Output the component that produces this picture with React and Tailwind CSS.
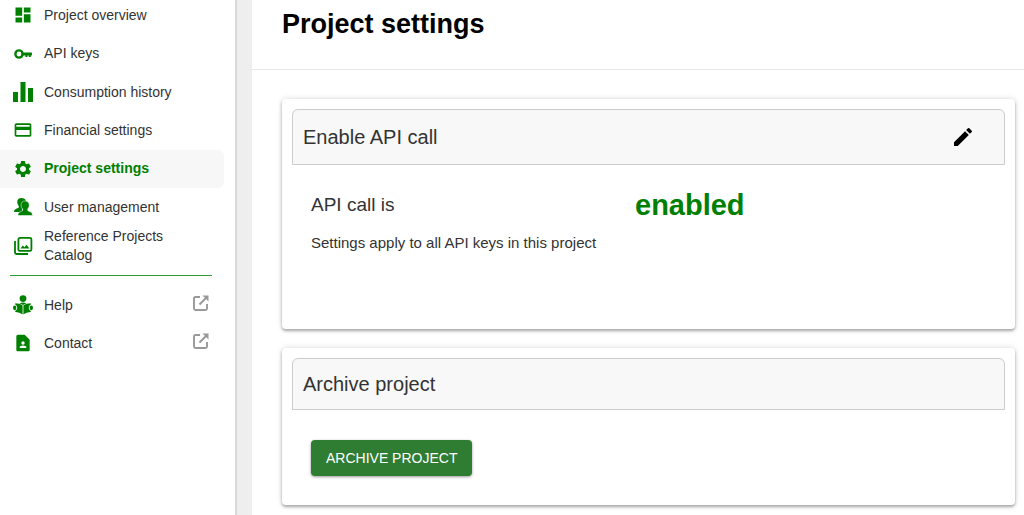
import React from "react";
import {
  MdDashboard,
  MdCreditCard,
  MdSettings,
  MdContactPage,
  MdEdit,
} from "react-icons/md";

const KeyIcon = () => (
  <svg viewBox="0 0 18 12" className="w-[18px] h-3" fill="none" stroke="currentColor">
    <circle cx="5" cy="6" r="3.600" strokeWidth="2.400" />
    <path d="M9 6h8" strokeWidth="3" strokeLinecap="round" />
    <path d="M12.5 6v3M15.8 6v3" strokeWidth="2" />
  </svg>
);

const BarsIcon = () => (
  <svg viewBox="0 0 20 20" className="w-5 h-5" fill="currentColor">
    <path d="M0 10h5v10H0zM7.5 0h5v20h-5zM15 6h5v14h-5z" />
  </svg>
);

const UsersIcon = () => (
  <svg viewBox="0 0 20 20" className="w-5 h-5" fill="currentColor">
    <path d="M8.500 1C5.800 1 4.200 2.500 4.300 5c0 1.600.6 3 1.500 4 .2 1.300-.2 1.900-1.300 2.300C2.600 12 1 12.500 1 15h8V9l4-5C12.600 2 11 1 8.500 1z" />
    <path
      d="M12 4c-2.600 0-4 1.600-3.900 4.100 0 1.600.6 2.900 1.500 3.900.2 1.300-.1 1.900-1.200 2.300-1.900.700-3.500 1.400-3.500 4.200h14.700c0-2.800-1.800-3.500-3.700-4.200-1.100-.4-1.400-1-1.200-2.300.9-1 1.500-2.300 1.500-3.900C16.300 5.600 14.600 4 12 4z"
      stroke="white"
      strokeWidth="0.5"
    />
  </svg>
);

const CatalogIcon = () => (
  <svg viewBox="0 0 20 20" className="w-5 h-5" fill="none" stroke="currentColor" strokeWidth="1.8">
    <rect x="5.4" y="1.9" width="13" height="13" rx="1.5" />
    <path d="M2 5v11.5Q2 18 3.5 18H15" />
    <path d="M7.500 12.500l2.300-3 1.700 1.800 2-2.600 3 3.800z" fill="currentColor" stroke="none" />
  </svg>
);

const ReaderIcon = () => (
  <svg viewBox="0 0 20 20" className="w-5 h-5" fill="currentColor">
    <circle cx="10" cy="3.6" r="3.4" />
    <path d="M9.600 10.600C7.700 9 5 8.200 2.300 8.200v1.600c1.300.4 1.900 1.600 1.900 3s-.6 2.500-1.900 3V17c2.700.1 5.300.9 7.300 2.500z" />
    <path d="M10.400 10.600c1.900-1.600 4.600-2.400 7.300-2.400v1.600c-1.300.4-1.900 1.600-1.900 3s.6 2.500 1.900 3V17c-2.700.1-5.300.9-7.300 2.500z" />
    <path d="M6.500 8.200Q10 6.800 13.500 8.200L10 9.900z" />
    <ellipse cx="1.700" cy="12.800" rx="1.700" ry="2.400" />
    <ellipse cx="18.300" cy="12.800" rx="1.700" ry="2.400" />
  </svg>
);

const ExternalIcon = () => (
  <svg viewBox="0 0 16 16" className="w-4 h-4 text-[#999]" fill="none" stroke="currentColor" strokeWidth="1.9">
    <path d="M7 2H2.5Q1 2 1 3.5v10Q1 15 2.5 15h10q1.500 0 1.500-1.500V9" />
    <path d="M6.5 9.5L13 3" />
    <path d="M9.5 0.5h6v6z" fill="currentColor" stroke="none" />
  </svg>
);

const menuItems = [
  { label: "Project overview", icon: <MdDashboard size={20} /> },
  { label: "API keys", icon: <KeyIcon /> },
  { label: "Consumption history", icon: <BarsIcon /> },
  { label: "Financial settings", icon: <MdCreditCard size={20} /> },
  { label: "Project settings", icon: <MdSettings size={20} />, active: true },
  { label: "User management", icon: <UsersIcon /> },
  { label: "Reference Projects Catalog", icon: <CatalogIcon /> },
];

const supportItems = [
  { label: "Help", icon: <ReaderIcon /> },
  { label: "Contact", icon: <MdContactPage size={20} /> },
];

const MenuLink = ({ item, external }) => (
  <a
    href="#"
    className={`flex items-center min-h-[38px] mr-[11px] pl-3 rounded-r-md text-sm leading-[19px] ${
      item.active ? "bg-[#f7f7f7] font-bold text-[#008000]" : "text-[#333]"
    }`}
  >
    <span className="flex justify-center w-[22px] mr-[10px] shrink-0 text-[#008000]">{item.icon}</span>
    <span className="flex-1 pr-10">{item.label}</span>
    {external && (
      <span className="mr-[15px] pb-1">
        <ExternalIcon />
      </span>
    )}
  </a>
);

const Card = ({ title, action, children }) => (
  <section className="rounded bg-white p-[10px] shadow-[0_2px_3px_rgba(0,0,0,0.3),0_0_6px_rgba(0,0,0,0.14)]">
    <div className="flex items-center justify-between rounded-t-md border border-[#ccc] bg-[#f8f8f8] px-[10px] py-3">
      <h2 className="text-xl leading-[26px] text-[#333]">{title}</h2>
      {action}
    </div>
    {children}
  </section>
);

const App = () => {
  return (
    <div className="flex min-h-screen bg-white font-['Liberation_Sans',Arial,sans-serif]">
      <aside className="w-[237px] shrink-0 border-r-2 border-[#d9d9d9]">
        <nav className="flex flex-col -mt-1">
          <div className="grid auto-rows-fr min-h-[269px]">
            {menuItems.map((item) => (
              <MenuLink key={item.label} item={item} />
            ))}
          </div>
          <hr className="ml-[10px] mr-[23px] my-[10px] border-[#2f9a33]" />
          {supportItems.map((item) => (
            <MenuLink key={item.label} item={item} external />
          ))}
        </nav>
      </aside>
      <div className="w-[15px] shrink-0 bg-[#eee]" />

      <main className="flex-1">
        <header className="border-b border-[#e8e8e8] px-[30px] pt-2 pb-[29px]">
          <h1 className="text-[27px] leading-8 font-bold text-black">Project settings</h1>
        </header>

        <div className="flex flex-col gap-[19px] pt-[29px] pl-[30px] pr-[9px] pb-[10px]">
          <Card
            title="Enable API call"
            action={
              <button type="button" aria-label="Edit" className="mr-4 p-[3px] text-black">
                <MdEdit size={24} />
              </button>
            }
          >
            <div className="px-[19px] pt-5 pb-[58px] text-[#333]">
              <div className="grid grid-cols-[12fr_13fr] items-center">
                <p className="text-[19px] leading-10">API call is</p>
                <p className="text-[29px] leading-10 font-bold text-[#008000]">enabled</p>
              </div>
              <p className="text-[15px] leading-9">Settings apply to all API keys in this project</p>
            </div>
          </Card>

          <Card title="Archive project">
            <div className="px-[19px] pt-[30px] pb-[19px]">
              <button
                type="button"
                className="rounded bg-[#2e7d32] px-[15px] py-[6px] text-sm leading-6 text-white shadow-[0_1px_3px_rgba(0,0,0,0.4)]"
              >
                ARCHIVE PROJECT
              </button>
            </div>
          </Card>
        </div>
      </main>
    </div>
  );
};

export default App;
